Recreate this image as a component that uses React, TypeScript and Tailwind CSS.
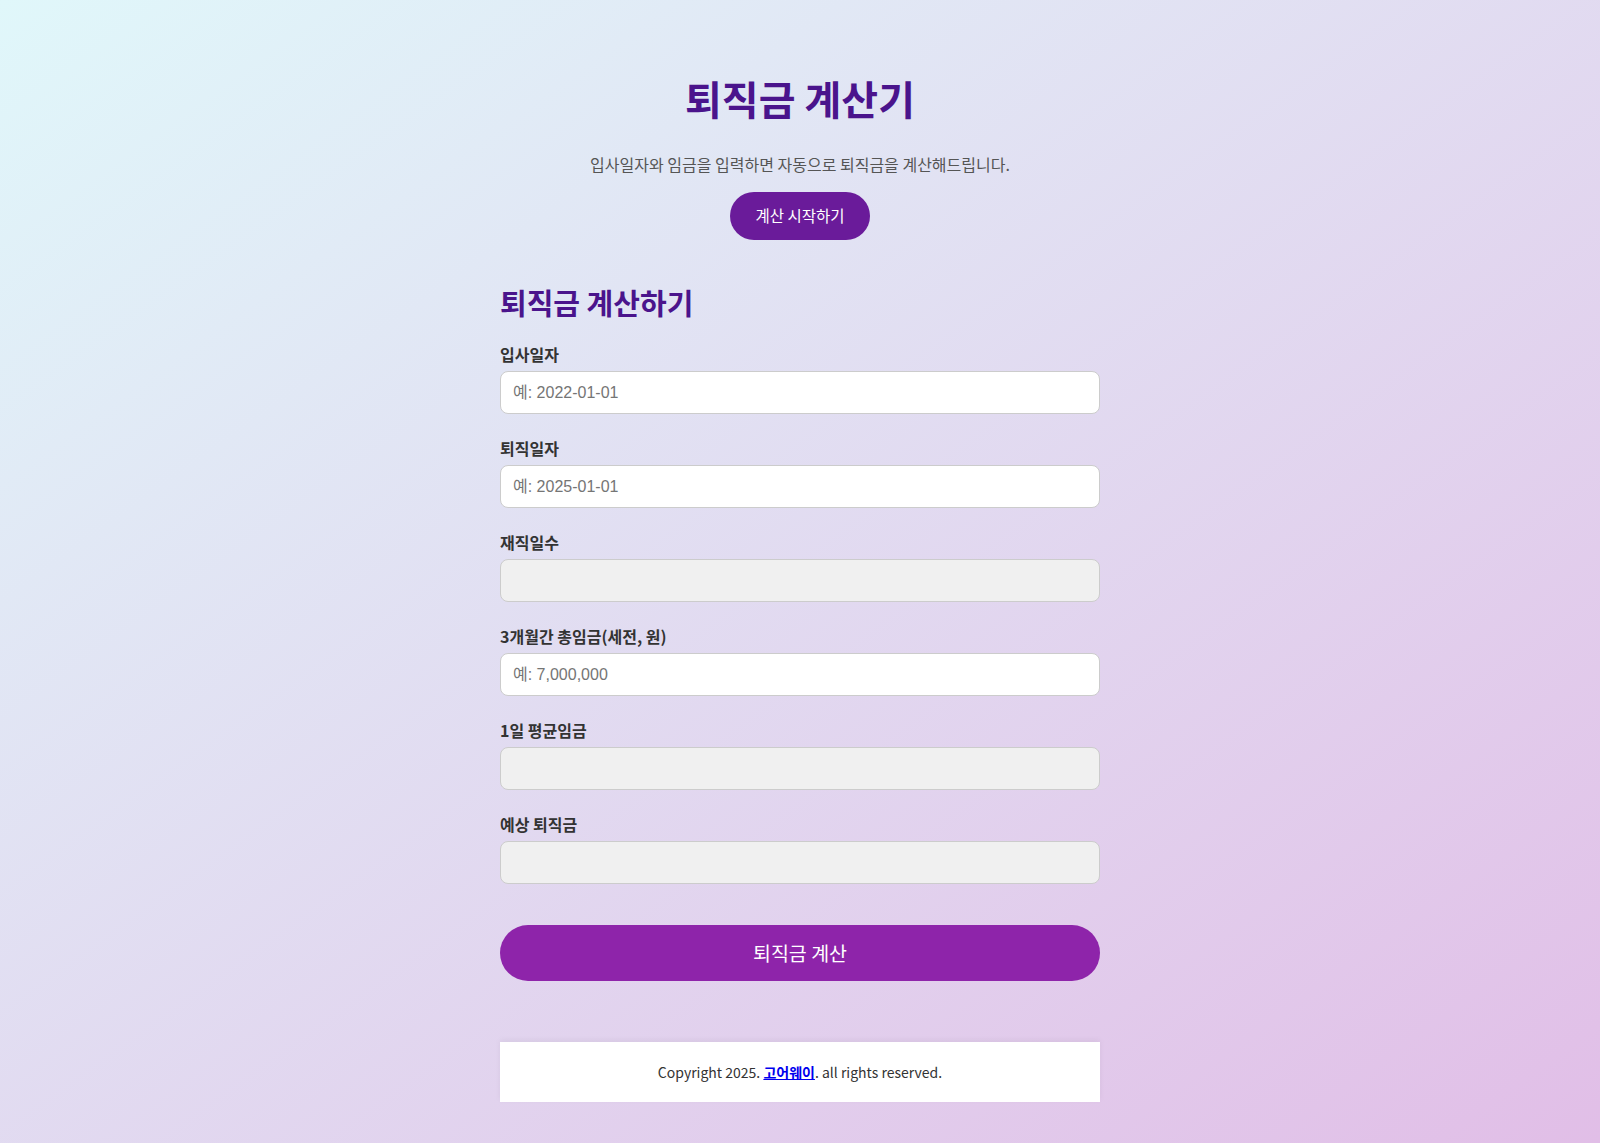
const KR = "font-['Noto_Sans_CJK_KR','Noto_Sans',sans-serif]";

const fields = [
  { label: "입사일자", placeholder: "예: 2022-01-01", readOnly: false },
  { label: "퇴직일자", placeholder: "예: 2025-01-01", readOnly: false },
  { label: "재직일수", placeholder: "", readOnly: true },
  { label: "3개월간 총임금(세전, 원)", placeholder: "예: 7,000,000", readOnly: false },
  { label: "1일 평균임금", placeholder: "", readOnly: true },
  { label: "예상 퇴직금", placeholder: "", readOnly: true },
];

export default function App() {
  return (
    <div
      className={`min-h-screen bg-gradient-to-br from-[#e0f7fa] to-[#e1bee7] text-[#333] ${KR}`}
    >
      <div className="mx-auto w-[600px] pb-[41px]">
        {/* Hero */}
        <section className="pt-[74px] text-center">
          <h1 className="text-[40px] font-bold leading-[48px] text-[#4a148c]">퇴직금 계산기</h1>
          <p className="mt-[30px] text-[16px] leading-[24px] text-[#555]">
            입사일자와 임금을 입력하면 자동으로 퇴직금을 계산해드립니다.
          </p>
          <button className="mt-4 h-12 rounded-full bg-[#6a1b9a] px-[25px] text-[15.5px] text-white">
            계산 시작하기
          </button>
        </section>

        {/* Calculator */}
        <section className="mt-[44px]">
          <h2 className="text-[29px] font-bold leading-[36px] text-[#4a148c]">퇴직금 계산하기</h2>
          <div className="mt-[23px] flex flex-col gap-[23px]">
            {fields.map((f) => (
              <div key={f.label} className="flex flex-col gap-[6px]">
                <label className="text-[16px] font-bold leading-[22px] text-[#333]">{f.label}</label>
                <input
                  readOnly={f.readOnly}
                  placeholder={f.placeholder}
                  className={`h-[43px] w-full rounded-lg border border-[#ccc] px-3 font-['Liberation_Sans','Noto_Sans_CJK_KR',sans-serif] text-[16px] placeholder:text-[#757575] focus:outline-none ${
                    f.readOnly ? "bg-[#f0f0f0]" : "bg-white"
                  }`}
                />
              </div>
            ))}
          </div>
          <button className="mt-[41px] h-14 w-full rounded-full bg-[#8e24aa] text-[19.5px] text-white">
            퇴직금 계산
          </button>
        </section>

        {/* Footer */}
        <footer className="mt-[61px] flex h-[60px] items-center justify-center bg-white text-[14px] text-[#333] shadow-[0_-2px_6px_rgba(0,0,0,0.05)]">
          <p>
            Copyright 2025.{" "}
            <a href="#" className="font-bold text-[#0000ee] underline">
              고어웨이
            </a>
            . all rights reserved.
          </p>
        </footer>
      </div>
    </div>
  );
}
